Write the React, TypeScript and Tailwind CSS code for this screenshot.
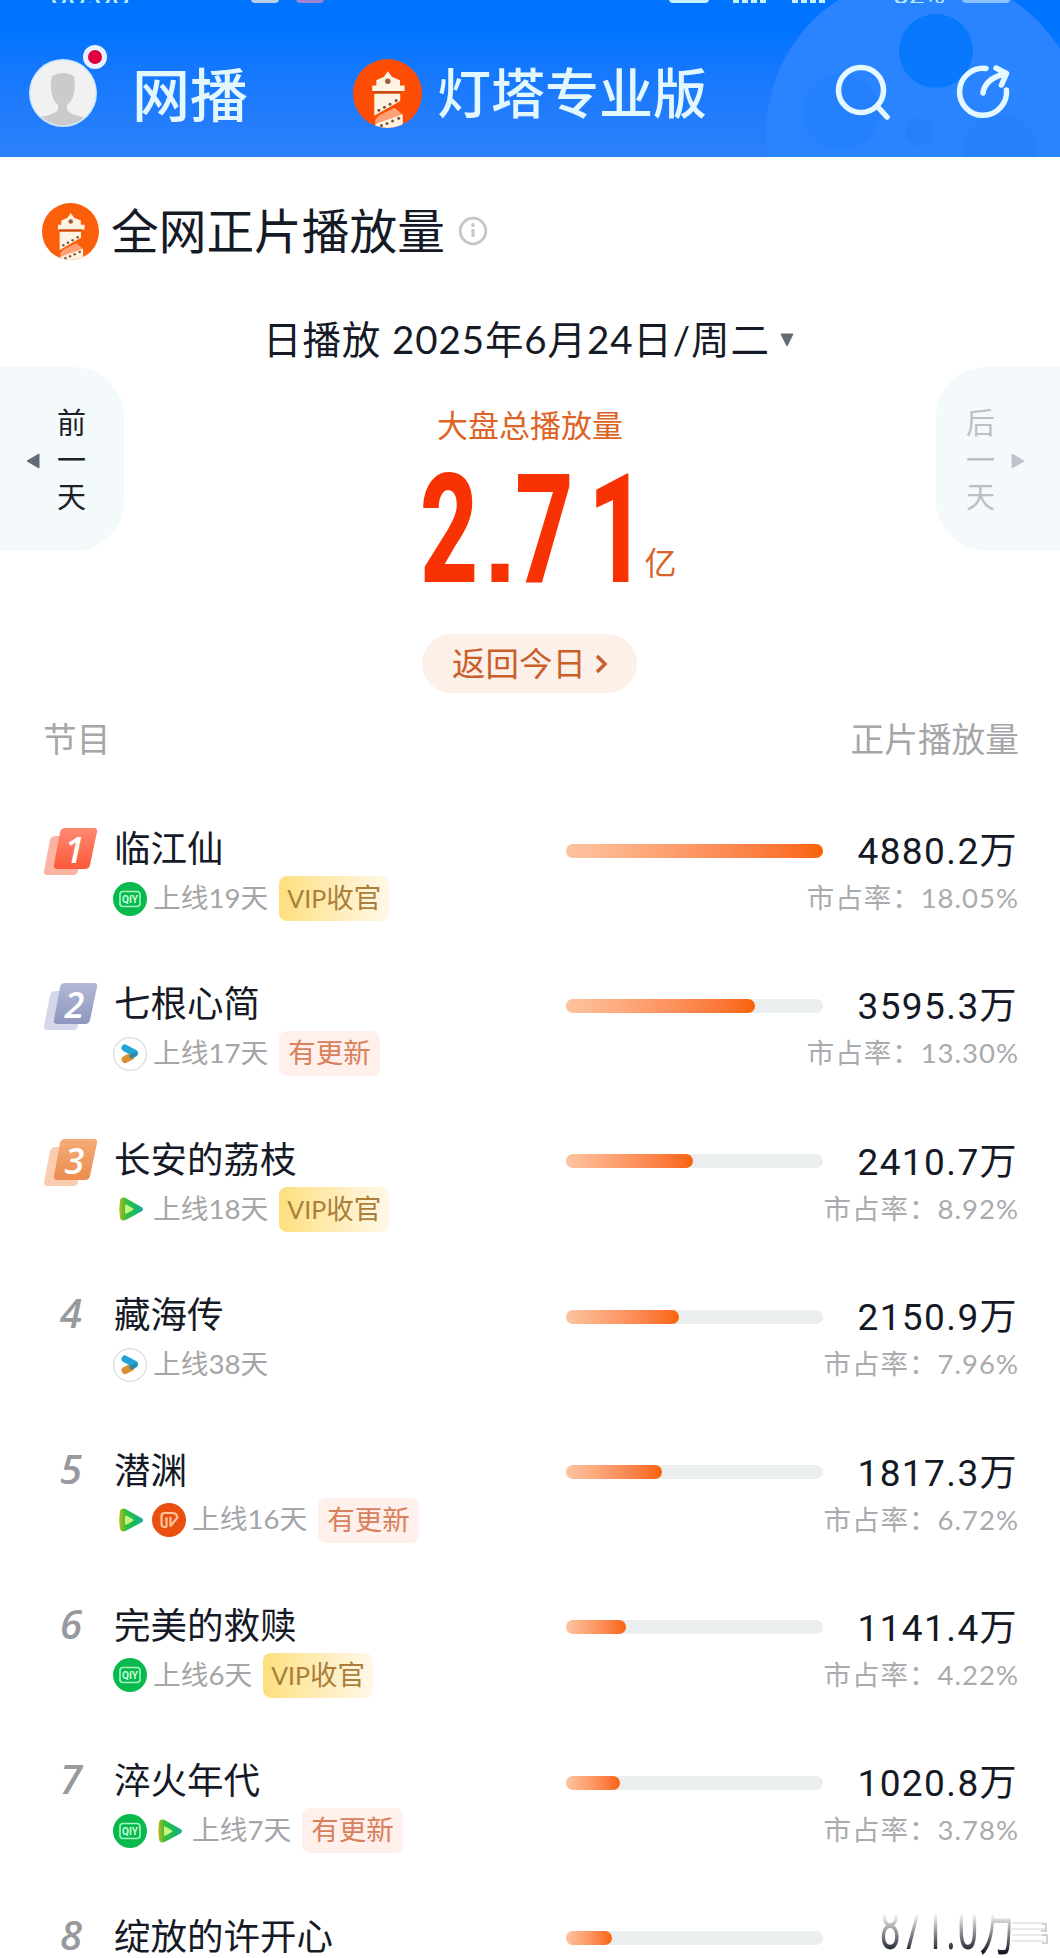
type Platform = 'iqiyi' | 'youku' | 'tencent' | 'mango';

type Show = {
    rank: number;
    name: string;
    platforms: Platform[];
    days: number;
    tag?: 'vip' | 'update';
    value: number;
    share?: string;
};

const shows: Show[] = [
    { rank: 1, name: '临江仙', platforms: ['iqiyi'], days: 19, tag: 'vip', value: 4880.2, share: '18.05%' },
    { rank: 2, name: '七根心简', platforms: ['youku'], days: 17, tag: 'update', value: 3595.3, share: '13.30%' },
    { rank: 3, name: '长安的荔枝', platforms: ['tencent'], days: 18, tag: 'vip', value: 2410.7, share: '8.92%' },
    { rank: 4, name: '藏海传', platforms: ['youku'], days: 38, value: 2150.9, share: '7.96%' },
    { rank: 5, name: '潜渊', platforms: ['tencent', 'mango'], days: 16, tag: 'update', value: 1817.3, share: '6.72%' },
    { rank: 6, name: '完美的救赎', platforms: ['iqiyi'], days: 6, tag: 'vip', value: 1141.4, share: '4.22%' },
    { rank: 7, name: '淬火年代', platforms: ['iqiyi', 'tencent'], days: 7, tag: 'update', value: 1020.8, share: '3.78%' },
    { rank: 8, name: '绽放的许开心', platforms: [], days: 0, value: 871.0 },
];

const Lighthouse = ({ className, color }: { className: string; color: string }) => (
    <svg viewBox="0 0 68 68" className={className}>
        <clipPath id="disc"><circle cx="34" cy="34" r="34" /></clipPath>
        <circle cx="34" cy="34" r="34" fill={color} />
        <g clipPath="url(#disc)">
            <path d="M34.300 12l4 5.500 8 3.500v5h4.500v5.500H19V26h4v-5l7.500-3.500z" fill="#fff4e4" />
            <circle cx="34.300" cy="22" r="2.700" fill="#9c6038" />
            <path d="M21 34h25.500v7.500L21 56z" fill="#fff4e4" />
            <path d="M21 31.500h26V34H21z" fill="#c64a12" />
            <path d="M25 56l16-8 8 7-27 9v-4z" fill="#ffa077" />
            <path d="M22 64l27-9.500V68H22z" fill="#fff4e4" />
            <g fill="#7d5836">
                <circle cx="25.500" cy="50.500" r="1.500" />
                <circle cx="31" cy="47.500" r="1.500" />
                <circle cx="36.500" cy="44.500" r="1.500" />
                <circle cx="42.500" cy="41" r="1.500" />
                <circle cx="28" cy="65.500" r="1.500" />
                <circle cx="33.500" cy="63.500" r="1.500" />
                <circle cx="39" cy="61" r="1.500" />
                <circle cx="45" cy="58.500" r="1.500" />
            </g>
        </g>
    </svg>
);

const PlatformIcon = ({ type }: { type: Platform }) => {
    if (type === 'iqiyi') {
        return (
            <svg viewBox="0 0 34 34" className="size-[34px]">
                <circle cx="17" cy="17" r="17" fill="#08b94c" />
                <rect x="7" y="9.500" width="20" height="15" rx="3" fill="none" stroke="#a5f5c4" strokeWidth="1.600" />
                <text x="17" y="21" fontSize="11" fontWeight="700" textAnchor="middle" textLength="16" lengthAdjust="spacingAndGlyphs" fill="#c9ffdc" fontFamily="Roboto, sans-serif">QIY</text>
            </svg>
        );
    }
    if (type === 'youku') {
        return (
            <svg viewBox="0 0 34 34" className="size-[34px]">
                <circle cx="17" cy="17" r="16.400" fill="#fff" stroke="#d8dcdf" strokeWidth="1.200" />
                <path d="M12 22.500L18 19.500" stroke="#dc8f30" strokeWidth="7" strokeLinecap="round" />
                <path d="M12 11L21.500 16" stroke="#20a5d0" strokeWidth="7" strokeLinecap="round" />
                <path d="M18.500 19.300l4-2" stroke="#2f86a8" strokeWidth="4" strokeLinecap="round" />
            </svg>
        );
    }
    if (type === 'tencent') {
        return (
            <svg viewBox="0 0 34 34" className="size-[34px]">
                <defs>
                    <linearGradient id="play" x1="0" x2="1">
                        <stop offset="0" stopColor="#c7b220" />
                        <stop offset="0.250" stopColor="#3bbf38" />
                        <stop offset="0.700" stopColor="#12b866" />
                        <stop offset="1" stopColor="#2aa3a8" />
                    </linearGradient>
                </defs>
                <path d="M7 8.500C7.500 5.500 10 5 12.500 6l15.500 8.700c2.800 1.600 2.800 3.500 0 5L12.500 28C10 29 7.500 28.500 7 25.500q-1.500-8.500 0-17z" fill="url(#play)" />
                <path d="M12 13.800c0-1.300.9-1.600 1.800-1.100l6 3.500c.9.600.9 1.300 0 1.900l-6 3.500c-.9.500-1.800.2-1.800-1.100z" fill="#c4f57c" />
            </svg>
        );
    }
    return (
        <svg viewBox="0 0 34 34" className="size-[34px]">
            <circle cx="17" cy="17" r="17" fill="#e9500f" />
            <path d="M14 24h-1.500c-2 0-3-1.200-3-3v-8c0-2 1.200-3 3-3H20c3 0 5 1.500 5 4M14.500 23.500V15M18.500 14.500V23l7-8.500" fill="none" stroke="#ffc39a" strokeWidth="2.200" strokeLinejoin="round" strokeLinecap="round" />
        </svg>
    );
};

const badgeColors: Record<number, string[]> = {
    1: ['#fbb3a2', '#ff8a72', '#fb5a38'],
    2: ['#d4d7ea', '#b3b8d6', '#8f96be'],
    3: ['#fbcdb0', '#f5ac78', '#ec8c50'],
};

const Rank = ({ rank }: { rank: number }) => {
    const colors = badgeColors[rank];
    if (!colors) {
        return <span className="-mt-0.5 w-[54px] pl-4 font-['Open_Sans'] text-[40px] leading-[50px] font-semibold italic text-[#97999c]">{rank}</span>;
    }
    return (
        <svg viewBox="0 0 54 48" className="mt-1 h-12 w-[54px]">
            <defs>
                <linearGradient id={`rank${rank}`} x1="0" y1="0" x2="0" y2="1">
                    <stop offset="0" stopColor={colors[1]} />
                    <stop offset="1" stopColor={colors[2]} />
                </linearGradient>
            </defs>
            <path d="M12 8h24q4 0 3 4l-5 31q-1 4-4 4H3q-4 0-3-4l6-31q1-4 6-4z" fill={colors[0]} />
            <path d="M21 0h29q4 0 3 4l-7 33q-1 4-5 4H14q-5 0-4-4l6-33q1-4 5-4z" fill={`url(#rank${rank})`} />
            <text x="30.500" y="34.500" fontSize="36" fontWeight="600" fontStyle="italic" textAnchor="middle" fill="#fff" fontFamily="Open Sans, sans-serif">{rank}</text>
        </svg>
    );
};

const Row = ({ show }: { show: Show }) => (
    <li className="flex h-[155.400px] shrink-0 pl-[44px] pr-[42px]">
        <div className="w-[70px] shrink-0">
            <div className="flex"><Rank rank={show.rank} /></div>
        </div>
        <div className="w-[452px] shrink-0">
            <p className="-mt-px text-[36.500px] leading-[50px] text-[#151a26]">{show.name}</p>
            {show.share && (
                <div className="mt-[3px] -ml-px flex h-[45px] items-center">
                    <div className="flex gap-[5px]">
                        {show.platforms.map((p) => <PlatformIcon key={p} type={p} />)}
                    </div>
                    <span className="-mt-0.5 ml-[6px] text-[27.700px] text-[#a3a5a9]">上线{show.days}天</span>
                    {show.tag === 'vip' && (
                        <span className="ml-[11px] h-[45px] rounded-lg bg-linear-to-r from-[#fedf7c] to-[#fff8e8] px-[8px] text-[27.500px] leading-[43px] text-[#ab7f3a]"><span className="text-[25px]">VIP</span>收官</span>
                    )}
                    {show.tag === 'update' && (
                        <span className="ml-[11px] h-[45px] rounded-lg bg-[#fff0ec] px-[9px] text-[27.500px] leading-[43px] text-[#d9805c]">有更新</span>
                    )}
                </div>
            )}
        </div>
        <div className="mt-[19.500px] h-[14px] w-[257px] shrink-0 rounded-full bg-[#ebeeef]">
            <div
                className="h-full rounded-full bg-linear-to-r from-[#fcc4a0] to-[#f96300]"
                style={{ width: `${(show.value / 4880.2) * 100}%` }}
            />
        </div>
        <div className="relative flex min-w-0 flex-1 flex-col items-end whitespace-nowrap">
            {show.share ? (
                <>
                    <p className="pt-px font-[Roboto,'Noto_Sans_CJK_SC'] text-[37px] leading-[54px] tracking-[1.400px] text-[#141925]">{show.value.toFixed(1)}万</p>
                    <p className="-mr-px -mt-1 text-[27.500px] leading-[45px] tracking-[1px] text-[#a9abae]">市占率：{show.share}</p>
                </>
            ) : (
                <>
                    <p className="mt-[3px] origin-[50%_78%] scale-y-[1.700] mask-linear-180 mask-linear-from-30% mask-linear-to-80% mask-linear-from-transparent mask-linear-to-black font-[Roboto,'Noto_Sans_CJK_SC'] text-[37px] leading-[46px] tracking-[1.400px] text-[#141925]">{show.value.toFixed(1)}万</p>
                    <svg viewBox="0 0 36 26" className="absolute top-[8px] -right-[30px] h-[26px] w-9">
                        <path d="M0 3h32M0 9h34M0 15h34M0 21h32" stroke="#e2e2e4" strokeWidth="1.500" />
                        <path d="M30 4h4v7h-5M30 15h5v8h-5" fill="none" stroke="#c4c4c7" strokeWidth="1.500" />
                    </svg>
                </>
            )}
        </div>
    </li>
);

const Header = () => (
    <header className="relative h-[157px] shrink-0 overflow-hidden bg-linear-to-b from-[#0074ff] from-20% to-[#2c80fa]">
        <svg viewBox="0 0 1060 157" className="absolute inset-0 h-full w-full">
            <circle cx="925" cy="133" r="159" fill="#2a84ff" />
            <circle cx="936" cy="51" r="37" fill="#0879fd" />
            <circle cx="841" cy="112" r="38" fill="#2480fc" />
            <circle cx="1000" cy="152" r="37" fill="#2680fb" />
            <circle cx="919" cy="132" r="14" fill="#2680fb" />
        </svg>
        {/* tail of the status bar, most of it is scrolled out */}
        <div className="relative flex h-[3px] items-end overflow-hidden pl-[50px] font-[Roboto] text-[32px] leading-[16px] text-[#b9ecff]">
            <span className="w-[201px]">08:08</span>
            <span className="h-1 w-7 rounded-b bg-[#b9cfe6]" />
            <span className="ml-[17px] h-1 w-7 rounded-b bg-[#9b86cf]" />
            <span className="ml-[345px] h-1 w-10 rounded-b bg-[#c4f2ff]" />
            <span className="ml-6 h-1 w-[34px] bg-[repeating-linear-gradient(90deg,#c4f2ff_0_6px,transparent_6px_9px)]" />
            <span className="ml-[25px] h-1 w-[34px] bg-[repeating-linear-gradient(90deg,#c4f2ff_0_6px,transparent_6px_9px)]" />
            <span className="ml-[67px] w-[69px] text-[28px]">82%</span>
            <span className="h-1 w-12 rounded-b bg-[#8cc4ff]" />
        </div>
        <div className="relative flex h-[154px] items-center pl-[29px] pt-[26px]">
            <div className="relative">
                <svg viewBox="0 0 68 68" className="size-[68px]">
                    <clipPath id="avatar"><circle cx="34" cy="34" r="32.500" /></clipPath>
                    <circle cx="34" cy="34" r="34" fill="#cfe6fb" />
                    <circle cx="34" cy="34" r="32.500" fill="#f1f1f1" />
                    <g clipPath="url(#avatar)" fill="#cbcbcb">
                        <path d="M23 17q11-6 22 0 2 10-.5 19-2 7-6.500 10v5q2 4 16 7v12H12V58q14-3 17-7v-5q-4-3-6-10-2.500-9 0-19z" />
                    </g>
                </svg>
                <span className="absolute -top-[14px] left-[54px] flex size-6 items-center justify-center rounded-full bg-[#eaf2ff]">
                    <span className="size-[14px] rounded-full bg-[#e0003f]" />
                </span>
            </div>
            <span className="ml-[35px] w-[221px] pt-1 text-[58px] leading-none font-medium text-[#e3f7ff]">网播</span>
            <Lighthouse className="size-[69px]" color="#fd4d04" />
            <span className="ml-[15px] w-[397px] pt-0.5 text-[54px] leading-none font-medium text-[#e3f7ff]">灯塔专业版</span>
            <svg viewBox="0 0 58 58" className="size-[58px]" fill="none" stroke="#e3f9ff" strokeWidth="5.500" strokeLinecap="round">
                <circle cx="27" cy="26" r="22.500" />
                <path d="M43 42l10 11" />
            </svg>
            <svg viewBox="0 0 58 58" className="ml-[62px] size-[58px]" fill="none" stroke="#e3f9ff" strokeWidth="5.500" strokeLinecap="round" strokeLinejoin="round">
                <path d="M32 4.500A23.500 23.500 0 1 0 52.500 26" />
                <path d="M29 29q2-14 21-19M42 4l10.500 5.500-5 11.500" />
            </svg>
        </div>
    </header>
);

const App = () => {
    return (
        <div className="flex h-[1958px] w-[1060px] flex-col overflow-hidden bg-white font-[Lato,'Noto_Sans_CJK_SC',sans-serif]">
            <Header />
            <div className="flex h-[148px] shrink-0 items-center pl-[42px]">
                <Lighthouse className="size-[57px]" color="#fb5f0b" />
                <h1 className="ml-3 text-[47.700px] leading-none text-[#151a26]">全网正片播放量</h1>
                <svg viewBox="0 0 30 30" className="ml-[13px] size-[30px]">
                    <circle cx="15" cy="15" r="12.800" fill="none" stroke="#c3c7ca" strokeWidth="2.800" />
                    <path d="M15 13v8" stroke="#c3c7ca" strokeWidth="3" />
                    <circle cx="15" cy="9" r="1.900" fill="#c3c7ca" />
                </svg>
            </div>
            <div className="flex h-[62px] shrink-0 items-center pl-[263px] pt-[7px] text-[#151a26]">
                <span className="text-[38.500px] leading-none tracking-[0.900px] whitespace-nowrap">日播放 2025年6月24日/周二</span>
                <svg viewBox="0 0 14 14" className="ml-[10px] size-[14px]"><path d="M1 1h12L7 13z" fill="#646b75" stroke="#646b75" strokeLinejoin="round" /></svg>
            </div>
            <div className="flex h-[337px] shrink-0 items-start justify-between">
                <div className="flex h-[184px] w-[124px] items-center rounded-r-[50px] bg-[#f4fafb] pl-[26px]">
                    <svg viewBox="0 0 14 16" className="mt-1 h-4 w-[14px]"><path d="M13 1v14L1 8z" fill="#626b75" stroke="#626b75" strokeLinejoin="round" /></svg>
                    <span className="ml-[17px] w-[29px] text-[29px] leading-[37px] text-[#1b2029]">前一天</span>
                </div>
                <div className="flex flex-col items-center pt-[39px]">
                    <p className="text-[31px] leading-[38px] text-[#dd6426]">大盘总播放量</p>
                    <div className="mt-[29px] flex h-[111px] items-center pl-[37px]">
                        <div className="mt-[18px] w-[224px]">
                            <p className="w-[330px] origin-left scale-x-[0.660] font-[Roboto] text-[153px] leading-[111px] font-extrabold tracking-[6px] whitespace-nowrap text-[#f93203]">
                                2<span className="mr-[2px] ml-[2px] inline-block w-[46px] origin-left scale-x-150 font-['Liberation_Sans'] text-[122px] leading-none font-bold tracking-normal">.</span>7<span className="ml-4">1</span>
                            </p>
                        </div>
                        <span className="mt-[69px] text-[32px] leading-none text-[#d9622a]">亿</span>
                    </div>
                    <button className="mt-[50px] flex h-[59px] w-[215px] items-center justify-center rounded-full bg-[#fdf0e8] text-[33.500px] text-[#c9602c]">
                        返回今日
                        <svg viewBox="0 0 14 20" className="ml-2 h-5 w-[14px]"><path d="M3 2l8 8-8 8" fill="none" stroke="#c9602c" strokeWidth="3.500" /></svg>
                    </button>
                </div>
                <div className="flex h-[184px] w-[124px] items-center rounded-l-[50px] bg-[#f4fafb] pl-[30px]">
                    <span className="w-[29px] text-[29px] leading-[37px] text-[#bbc0c5]">后一天</span>
                    <svg viewBox="0 0 14 16" className="mt-1 ml-4 h-4 w-[14px]"><path d="M1 1v14L13 8z" fill="#bcc2ca" stroke="#bcc2ca" strokeLinejoin="round" /></svg>
                </div>
            </div>
            <div className="flex h-[70px] shrink-0 items-center justify-between pl-[43px] pr-[41px] text-[33.700px] text-[#a4a6a9]">
                <span>节目</span>
                <span>正片播放量</span>
            </div>
            <ul className="mt-[50px] flex flex-col">
                {shows.map((show) => <Row key={show.rank} show={show} />)}
            </ul>
        </div>
    );
};

export default App;
